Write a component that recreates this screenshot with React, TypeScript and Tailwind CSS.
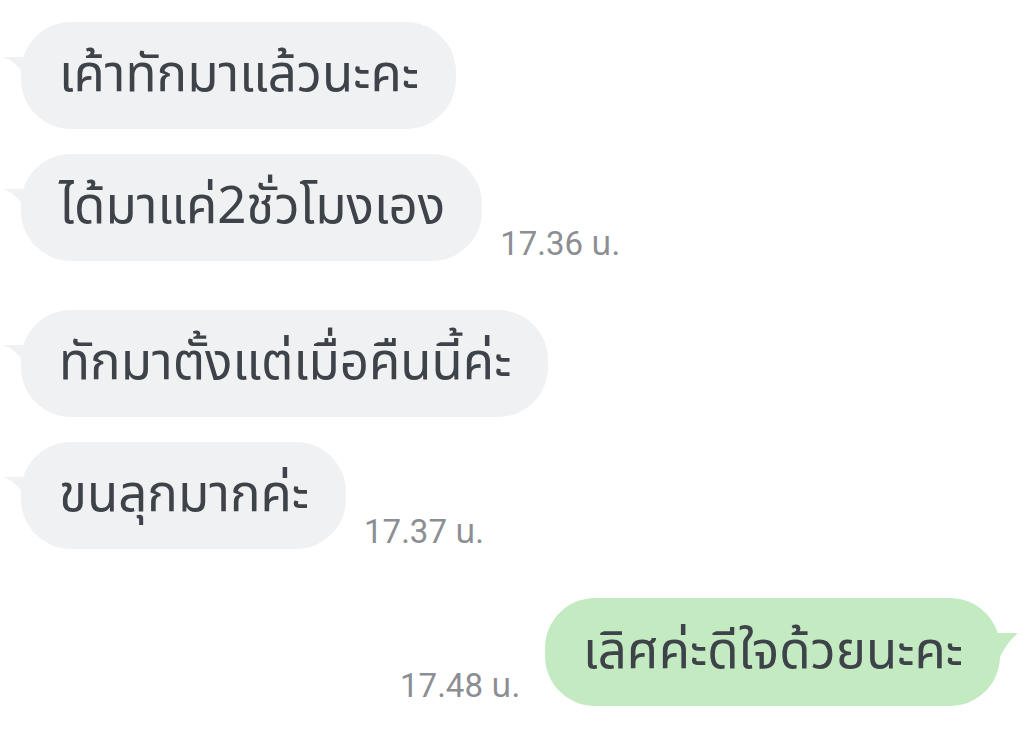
import React from "react";

const font = { fontFamily: '"Noto Sans Thai", "Noto Sans", Roboto, sans-serif' };
const timeFont = { fontFamily: 'Roboto, "Noto Sans Thai", sans-serif' };

function Left({ text, time }: { text: string; time?: string }) {
  return (
    <div className="flex items-end">
      <div className="relative ml-[21px] h-[107px] flex items-center rounded-[50px] bg-[#f0f1f3] pl-[38px] pr-[37px] text-[51px] text-[#3e4249]">
        <svg className="absolute left-[-18px] top-[35px]" width="20" height="16" viewBox="0 0 20 16">
          <path d="M0 0 L20 0 L20 16 Q12 4 0 0 Z" fill="#f0f1f3" />
        </svg>
        <span className="whitespace-nowrap leading-none">{text}</span>
      </div>
      {time && (
        <div className="ml-[18px] mb-[1px] text-[33px] leading-none text-[#8b8e93]" style={timeFont}>
          {time}
        </div>
      )}
    </div>
  );
}

export default function App() {
  return (
    <div className="w-[1023px] h-[754px] bg-white overflow-hidden pt-[22px]" style={font}>
      <div className="flex flex-col">
        <Left text="เค้าทักมาแล้วนะคะ" />
        <div className="h-[25px]" />
        <Left text="ได้มาแค่2ชั่วโมงเอง" time="17.36 น." />
        <div className="h-[49px]" />
        <Left text="ทักมาตั้งแต่เมื่อคืนนี้ค่ะ" />
        <div className="h-[25px]" />
        <Left text="ขนลุกมากค่ะ" time="17.37 น." />
        <div className="h-[49px]" />
        <div className="flex items-end justify-end pr-[23px]">
          <div className="mr-[25px] mb-[4px] text-[33px] leading-none text-[#8b8e93]" style={timeFont}>
            17.48 น.
          </div>
          <div className="relative h-[108px] flex items-center rounded-[50px] bg-[#c4eac2] pl-[38px] pr-[37px] text-[51px] text-[#3e4249]">
            <svg className="absolute right-[-18px] top-[35px]" width="20" height="28" viewBox="0 0 20 28">
              <path d="M20 0 L0 0 L0 28 Q8 10 20 0 Z" fill="#c4eac2" />
            </svg>
            <span className="whitespace-nowrap leading-none">เลิศค่ะดีใจด้วยนะคะ</span>
          </div>
        </div>
      </div>
    </div>
  );
}
